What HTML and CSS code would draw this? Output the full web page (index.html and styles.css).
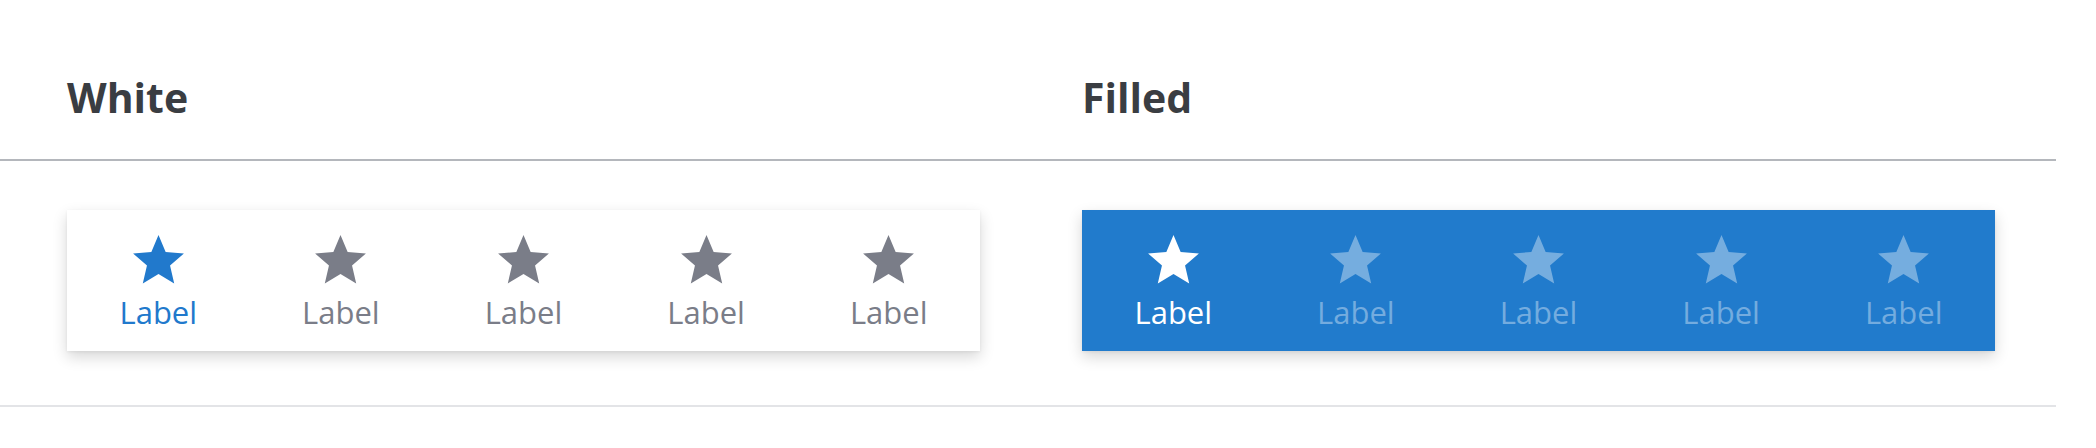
FILE: index.html
```html
<!DOCTYPE html>
<html lang="en">
<head>
<meta charset="utf-8">
<title>Tab bar variants</title>
<link rel="stylesheet" href="styles.css">
</head>
<body>
<main class="page">
  <div class="row head-row">
    <h2 class="title">White</h2>
    <h2 class="title">Filled</h2>
  </div>
  <div class="row demo-row">
    <nav class="tabbar tabbar--white">
      <a class="tab is-active"><svg class="star" viewBox="0 0 24 24"><path d="M12 17.27L18.18 21l-1.64-7.03L22 9.24l-7.19-.61L12 2 9.19 8.63 2 9.24l5.46 4.73L5.82 21z"/></svg><span class="tab-label">Label</span></a>
      <a class="tab"><svg class="star" viewBox="0 0 24 24"><path d="M12 17.27L18.18 21l-1.64-7.03L22 9.24l-7.19-.61L12 2 9.19 8.63 2 9.24l5.46 4.73L5.82 21z"/></svg><span class="tab-label">Label</span></a>
      <a class="tab"><svg class="star" viewBox="0 0 24 24"><path d="M12 17.27L18.18 21l-1.64-7.03L22 9.24l-7.19-.61L12 2 9.19 8.63 2 9.24l5.46 4.73L5.82 21z"/></svg><span class="tab-label">Label</span></a>
      <a class="tab"><svg class="star" viewBox="0 0 24 24"><path d="M12 17.27L18.18 21l-1.64-7.03L22 9.24l-7.19-.61L12 2 9.19 8.63 2 9.24l5.46 4.73L5.82 21z"/></svg><span class="tab-label">Label</span></a>
      <a class="tab"><svg class="star" viewBox="0 0 24 24"><path d="M12 17.27L18.18 21l-1.64-7.03L22 9.24l-7.19-.61L12 2 9.19 8.63 2 9.24l5.46 4.73L5.82 21z"/></svg><span class="tab-label">Label</span></a>
    </nav>
    <nav class="tabbar tabbar--filled">
      <a class="tab is-active"><svg class="star" viewBox="0 0 24 24"><path d="M12 17.27L18.18 21l-1.64-7.03L22 9.24l-7.19-.61L12 2 9.19 8.63 2 9.24l5.46 4.73L5.82 21z"/></svg><span class="tab-label">Label</span></a>
      <a class="tab"><svg class="star" viewBox="0 0 24 24"><path d="M12 17.27L18.18 21l-1.64-7.03L22 9.24l-7.19-.61L12 2 9.19 8.63 2 9.24l5.46 4.73L5.82 21z"/></svg><span class="tab-label">Label</span></a>
      <a class="tab"><svg class="star" viewBox="0 0 24 24"><path d="M12 17.27L18.18 21l-1.64-7.03L22 9.24l-7.19-.61L12 2 9.19 8.63 2 9.24l5.46 4.73L5.82 21z"/></svg><span class="tab-label">Label</span></a>
      <a class="tab"><svg class="star" viewBox="0 0 24 24"><path d="M12 17.27L18.18 21l-1.64-7.03L22 9.24l-7.19-.61L12 2 9.19 8.63 2 9.24l5.46 4.73L5.82 21z"/></svg><span class="tab-label">Label</span></a>
      <a class="tab"><svg class="star" viewBox="0 0 24 24"><path d="M12 17.27L18.18 21l-1.64-7.03L22 9.24l-7.19-.61L12 2 9.19 8.63 2 9.24l5.46 4.73L5.82 21z"/></svg><span class="tab-label">Label</span></a>
    </nav>
  </div>
</main>
</body>
</html>
```

FILE: styles.css
```css
* {
  box-sizing: border-box;
}

html, body {
  margin: 0;
  background: #ffffff;
}

body {
  font-family: "Open Sans", "Noto Sans", sans-serif;
  color: #3a3d42;
}

.page {
  width: 2056px;
}

.row {
  display: grid;
  grid-template-columns: 913px 913px;
  column-gap: 102px;
  padding-left: 67px;
}

.head-row {
  padding-top: 69px;
  padding-bottom: 34px;
  border-bottom: 2px solid #b4b7bc;
}

.title {
  margin: 0;
  font-size: 41px;
  line-height: 56px;
  font-weight: 700;
  color: #3a3d42;
}

.demo-row {
  padding-top: 49px;
  padding-bottom: 54px;
  border-bottom: 2px solid #e3e4e7;
}

.tabbar {
  display: grid;
  grid-template-columns: repeat(5, 1fr);
  height: 141px;
  padding: 20px 0;
  box-shadow: 0 6px 14px rgba(0, 0, 0, 0.16), 0 1px 3px rgba(0, 0, 0, 0.06);
}

.tabbar--white {
  background: #ffffff;
  color: #7a7d88;
}

.tabbar--filled {
  background: #217bcc;
  color: rgba(255, 255, 255, 0.38);
}

.tab {
  display: flex;
  flex-direction: column;
  align-items: center;
}

.star {
  display: block;
  width: 61px;
  height: 61px;
  fill: currentColor;
}

.tab-label {
  margin-top: 1px;
  font-size: 31px;
  line-height: 40px;
  font-weight: 400;
}

.tabbar--white .is-active {
  color: #2179cc;
}

.tabbar--filled .is-active {
  color: #ffffff;
}
```
